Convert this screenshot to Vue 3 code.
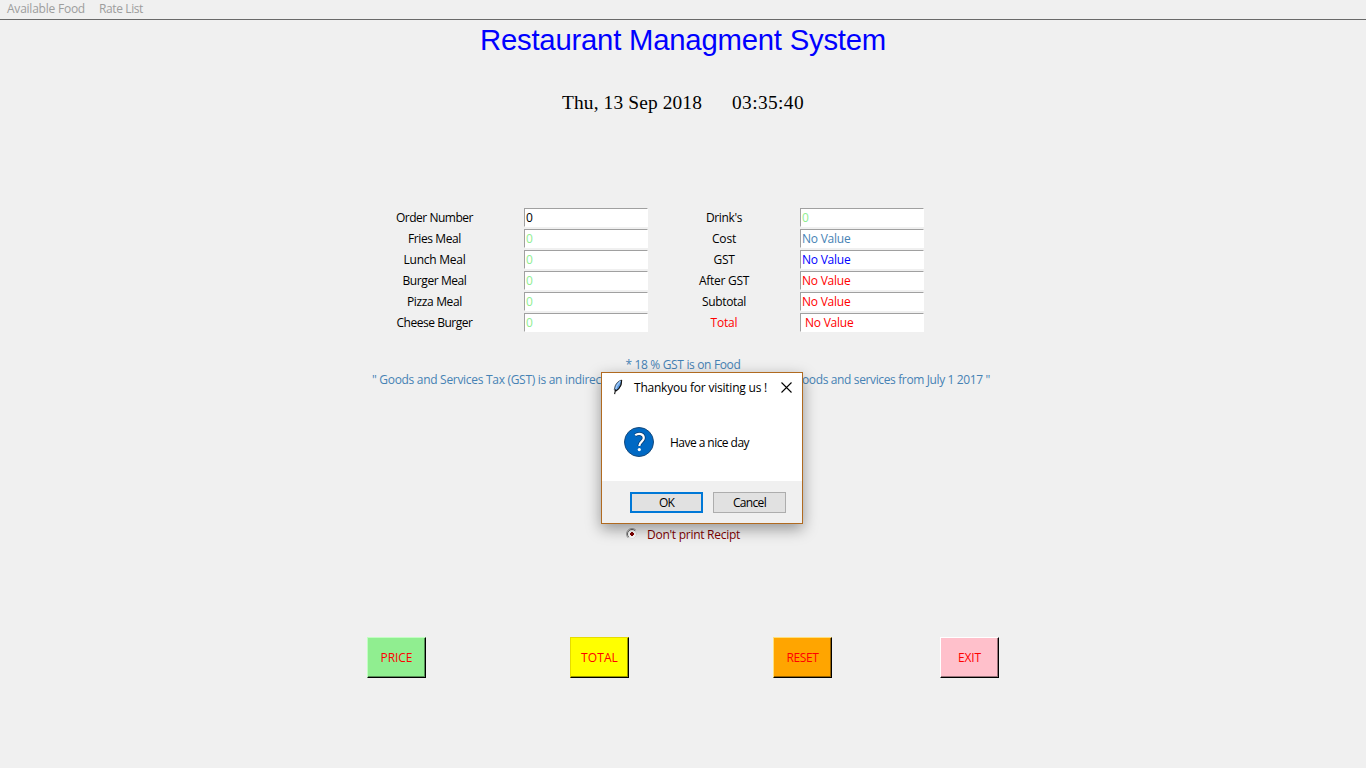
<script setup>
const vFit = {
  mounted(el, { value }) {
    const n = el.textContent.length
    const w = el.getBoundingClientRect().width
    el.style.letterSpacing = `${(value - w) / n}px`
  },
}

const left = [
  { label: 'Order Number', w: 77, value: '0', tone: 'black' },
  { label: 'Fries Meal', w: 53, value: '0', tone: 'green' },
  { label: 'Lunch Meal', w: 62, value: '0', tone: 'green' },
  { label: 'Burger Meal', w: 64, value: '0', tone: 'green' },
  { label: 'Pizza Meal', w: 55, value: '0', tone: 'green' },
  { label: 'Cheese Burger', w: 76, value: '0', tone: 'green' },
]
const right = [
  { label: "Drink's", w: 36, value: '0', tone: 'green' },
  { label: 'Cost', w: 24, value: 'No Value', tone: 'steel' },
  { label: 'GST', w: 21, value: 'No Value', tone: 'blue' },
  { label: 'After GST', w: 50, value: 'No Value', tone: 'red' },
  { label: 'Subtotal', w: 44, value: 'No Value', tone: 'red' },
  { label: 'Total', w: 27, value: 'No Value', tone: 'red', labelTone: 'red', inset: true },
]
const buttons = [
  { text: 'PRICE', w: 32, cls: 'price' },
  { text: 'TOTAL', w: 37, cls: 'total' },
  { text: 'RESET', w: 32, cls: 'reset' },
  { text: 'EXIT', w: 23, cls: 'exit' },
]
</script>

<template>
  <main class="app">
    <nav class="menu">
      <span v-fit="78">Available Food</span>
      <span v-fit="44">Rate List</span>
    </nav>
    <h1><span v-fit="406">Restaurant Managment System</span></h1>
    <div class="clock"><span v-fit="140">Thu, 13 Sep 2018</span><span v-fit="72">03:35:40</span></div>

    <section class="form">
      <div v-for="(col, c) in [left, right]" :key="c" class="col">
        <div v-for="r in col" :key="r.label" class="row">
          <label :class="r.labelTone"><span v-fit="r.w">{{ r.label }}</span></label>
          <div class="field" :class="[r.tone, { inset: r.inset }]">
            <span v-fit="r.value === '0' ? 7 : 48.5">{{ r.value }}</span>
          </div>
        </div>
      </div>
    </section>

    <section class="notes">
      <p><span v-fit="115">* 18 % GST is on Food</span></p>
      <p class="long"><span v-fit="229">" Goods and Services Tax (GST) is an indirec</span><span v-fit="188">oods and services from July 1 2017 "</span></p>
    </section>

    <div class="radio">
      <svg width="12" height="12" viewBox="0 0 12 12">
        <circle cx="6" cy="6" r="5" fill="#fff" />
        <path d="M2.1 9.9A5.5 5.5 0 0 1 9.9 2.1" fill="none" stroke="#a0a0a0" />
        <path d="M2.8 9.2A4.5 4.5 0 0 1 9.2 2.8" fill="none" stroke="#606060" />
        <path d="M9.2 2.8A4.5 4.5 0 0 1 2.8 9.2" fill="none" stroke="#e3e3e3" />
        <path d="M5 4h2v1h1v2h-1v1h-2v-1h-1v-2h1z" fill="#800000" />
      </svg>
      <span v-fit="93">Don't print Recipt</span>
    </div>

    <section class="actions">
      <button v-for="b in buttons" :key="b.text" :class="b.cls"><span v-fit="b.w">{{ b.text }}</span></button>
    </section>

    <div class="dialog">
      <header>
        <svg class="feather" width="12" height="16" viewBox="0 0 12 16">
          <path d="M9.6 1C7 1.6 4.2 4 3.1 7L2.2 10.8l1.4 1.4C6.2 10.6 8 8.4 9 5.2z" fill="#5c9be2" stroke="#333" stroke-width=".7" />
          <path d="M8.4 2.2L5 6.6 3.6 10.6" fill="none" stroke="#a9cff9" stroke-width="1.1" />
          <path d="M9.7 1.2L9 6 6.8 9.6 3.9 12M3.6 10.4L2.6 15.2" fill="none" stroke="#111" stroke-width="1.1" />
        </svg>
        <span class="title"><span v-fit="133">Thankyou for visiting us !</span></span>
        <svg class="close" width="11" height="11" viewBox="0 0 11 11"><path d="M.5.5l10 10M10.5.5l-10 10" stroke="#000" stroke-width="1.1" /></svg>
      </header>
      <div class="body">
        <svg width="30" height="30" viewBox="0 0 30 30">
          <circle cx="15" cy="15" r="14.5" fill="#0069c4" stroke="#174a7c" />
          <path d="M11.2 8.2C14.9 5.6 19.8 7 19.8 11C19.8 14.6 15.3 14.8 15.3 19" fill="none" stroke="#063d74" stroke-width="3.8" />
          <path d="M11.2 8.2C14.9 5.6 19.8 7 19.8 11C19.8 14.6 15.3 14.8 15.3 19" fill="none" stroke="#fff" stroke-width="2.2" />
          <circle cx="15.3" cy="22.6" r="1.6" fill="#fff" />
        </svg>
        <span v-fit="79">Have a nice day</span>
      </div>
      <footer>
        <div class="btn ok"><span v-fit="15">OK</span></div>
        <div class="btn"><span v-fit="33">Cancel</span></div>
      </footer>
    </div>
  </main>
</template>

<style>
body { margin: 0; background: #f0f0f0; overflow: hidden; }
</style>

<style scoped>
* { box-sizing: border-box; }
.app {
  position: relative;
  width: 1366px;
  height: 768px;
  overflow: hidden;
  display: flex;
  flex-direction: column;
  background: #f0f0f0;
  color: #000;
  font: 12px/15px "Open Sans", "Noto Sans", sans-serif;
}
span { white-space: nowrap; }
.menu {
  flex: none;
  height: 20px;
  padding: 1px 0 0 7px;
  display: flex;
  gap: 14px;
  color: #9d9d9d;
  border-bottom: 1px solid #696969;
}
h1 {
  margin: 0;
  height: 41px;
  text-align: center;
  font: 400 29.3px/39px "Liberation Sans", Arial, sans-serif;
  color: #00f;
}
.clock {
  margin-top: 30px;
  height: 24px;
  display: flex;
  justify-content: center;
  gap: 30px;
  font: 19.4px/24px "Liberation Serif", "Times New Roman", serif;
}
.form {
  margin: 93px 0 0 345px;
  display: flex;
}
.col { width: 303px; }
.col + .col { width: 276px; }
.row { display: flex; height: 21px; }
.row label { width: 179px; text-align: center; line-height: 19px; }
.col + .col label { width: 152px; }
.field {
  width: 124px;
  height: 19px;
  padding-left: 1px;
  background: #fff;
  border: 1px solid #fff;
  border-top-color: #a0a0a0;
  border-left-color: #a0a0a0;
  line-height: 18px;
}
.inset { padding-left: 4px; }
.black { color: #000; }
.green { color: #90ee90; }
.steel { color: #4682b4; }
.blue { color: #00f; }
.red { color: #f00; }
.notes { margin-top: 23px; color: #4682b4; text-align: center; }
.notes p { margin: 0; height: 15px; }
.notes .long { width: 618px; margin-left: 372px; display: flex; justify-content: space-between; }
.radio {
  margin: 140px 0 0 626px;
  height: 15px;
  display: flex;
  gap: 9px;
  color: #800000;
}
.radio svg { margin-top: 1px; }
.actions {
  margin: 95px 0 0 367px;
  width: 632px;
  display: grid;
  grid-template-columns: 203px 203px 167px 59px;
}
.actions button {
  width: 59px;
  height: 41px;
  padding: 0;
  border: 1px solid #000;
  font: inherit;
  color: #f00;
}
.price { background: #90ee90; border-top-color: #c2ffc2 !important; border-left-color: #c2ffc2 !important; box-shadow: inset -1px -1px #568e56; }
.total { background: #ff0; border-top-color: #e6dc00 !important; border-left-color: #e6dc00 !important; box-shadow: inset -1px -1px #999900; }
.reset { background: #ffa500; border-top-color: #ffe07a !important; border-left-color: #ffe07a !important; box-shadow: inset -1px -1px #996300; }
.exit { background: #ffc0cb; border-top-color: #fff !important; border-left-color: #fff !important; box-shadow: inset -1px -1px #997379; }

.dialog {
  position: absolute;
  left: 601px;
  top: 372px;
  width: 202px;
  height: 152px;
  display: flex;
  flex-direction: column;
  background: #fff;
  border: 1px solid #b06a20;
  box-shadow: 0 5px 14px rgba(0, 0, 0, 0.38);
}
.dialog header { height: 30px; display: flex; padding: 6px 0 0 10px; }
.title { width: 134px; margin-left: 10px; padding-top: 1px; }
.close { margin: 3px 0 0 13px; }
.feather { flex: none; }
.body { height: 78px; padding: 24px 0 0 22px; display: flex; gap: 16px; line-height: 32px; }
.body svg { flex: none; }
.dialog footer {
  flex: 1;
  display: flex;
  gap: 10px;
  padding: 11px 0 0 28px;
  background: #f0f0f0;
}
.btn {
  width: 73px;
  height: 21px;
  border: 1px solid #adadad;
  background: #e1e1e1;
  text-align: center;
  line-height: 20px;
}
.ok { border: 2px solid #0078d7; line-height: 18px; }
</style>
